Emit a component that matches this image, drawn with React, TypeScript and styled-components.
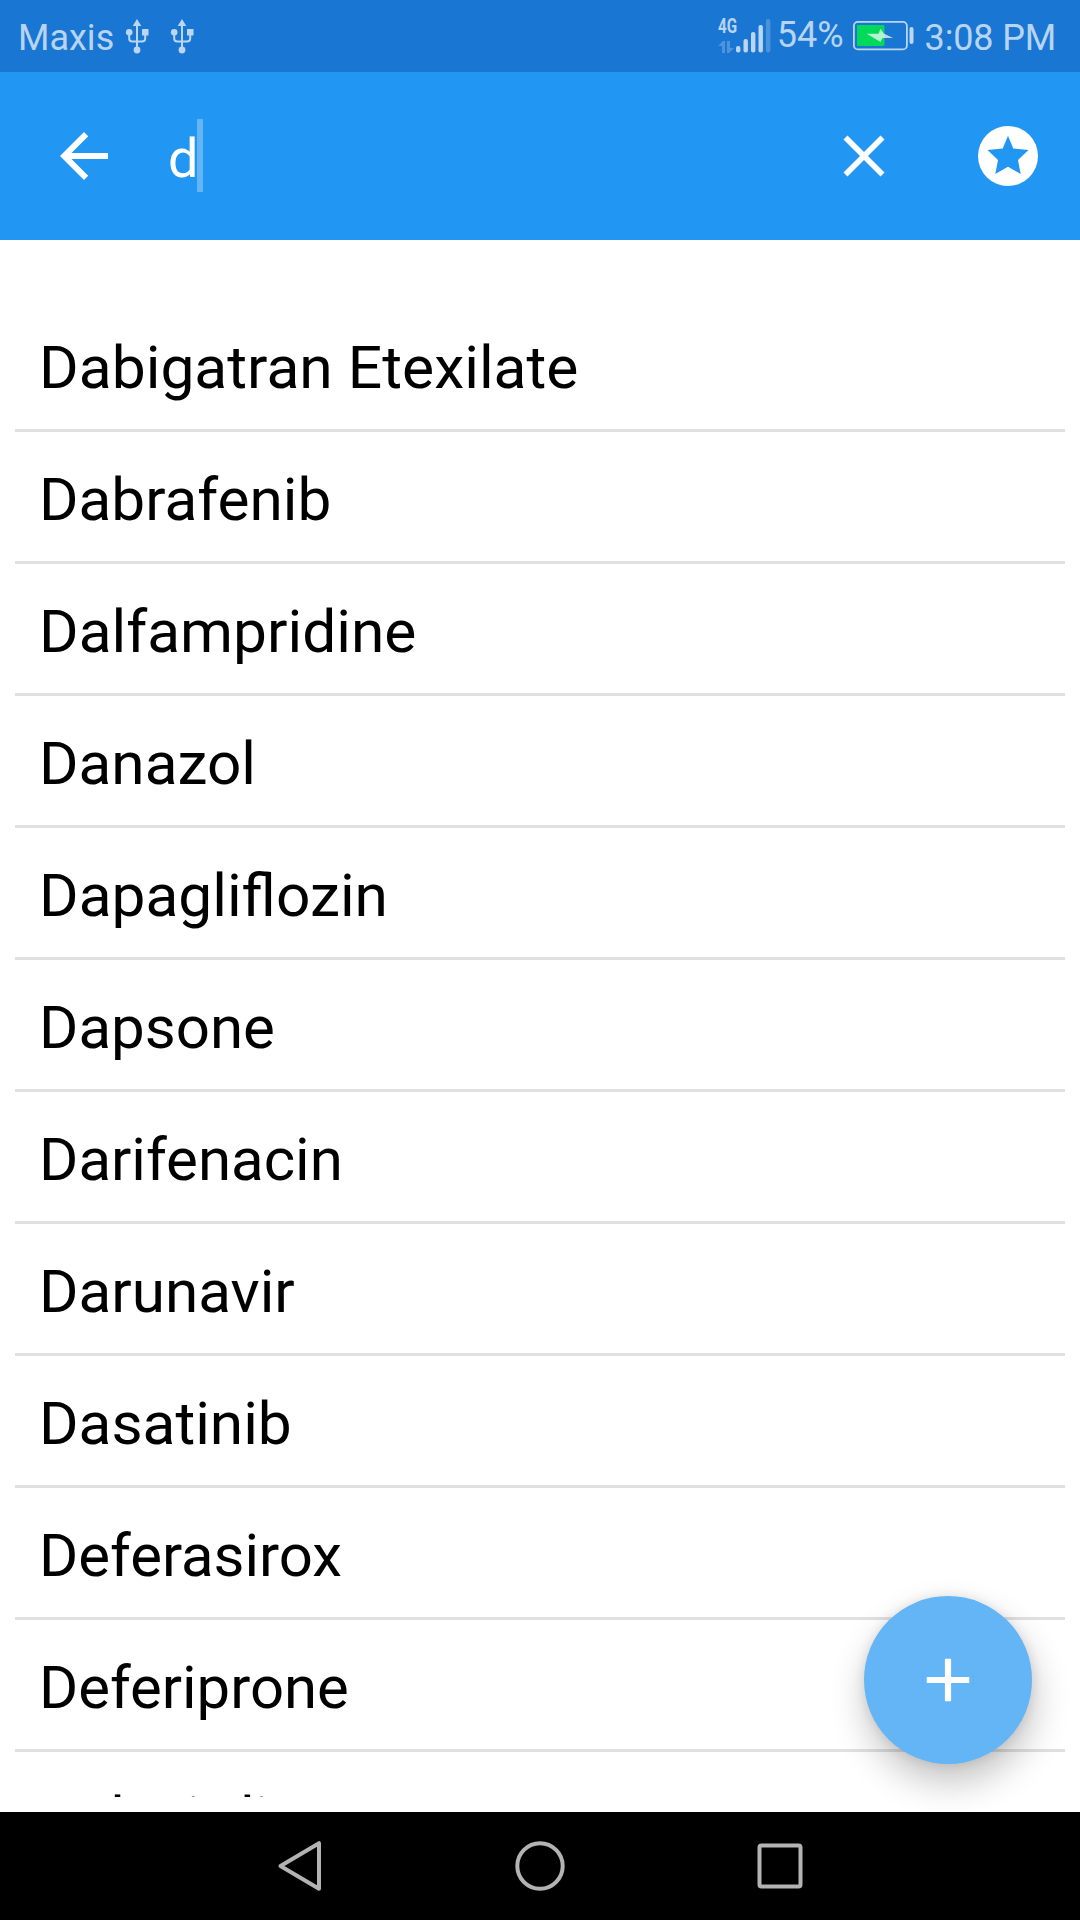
import React from "react";
import styled, { createGlobalStyle } from "styled-components";

const Global = createGlobalStyle`
  body { margin: 0; background: #fff; }
  * { box-sizing: border-box; }
`;

const Screen = styled.div`
  position: relative;
  display: flex;
  flex-direction: column;
  width: 1080px;
  height: 1920px;
  overflow: hidden;
  background: #fff;
  font-family: Roboto, "Noto Sans", sans-serif;
`;

const StatusBar = styled.header`
  display: flex;
  align-items: center;
  height: 72px;
  padding: 0 24px 0 18px;
  background: #1976d2;
  color: rgba(255, 255, 255, 0.7);
  flex: none;
`;

const StatusText = styled.span<{ $raise?: number; $drop?: number; $ml?: number; $tracking?: number }>`
  font-size: 36px;
  line-height: 42px;
  white-space: pre;
  margin-left: ${(p) => p.$ml ?? 0}px;
  letter-spacing: ${(p) => p.$tracking ?? 0}px;
  padding-top: ${(p) => p.$drop ?? 0}px;
  padding-bottom: ${(p) => p.$raise ?? 0}px;
`;

const Glyph = styled.svg<{ $ml?: number }>`
  display: block;
  flex: none;
  margin-left: ${(p) => p.$ml ?? 0}px;
`;

const Spacer = styled.div`
  flex: 1;
`;

const Network = styled.div`
  display: flex;
  flex-direction: column;
  width: 17px;
  height: 34px;
  justify-content: space-between;
`;

const NetworkLabel = styled.span`
  font-size: 20px;
  font-weight: 700;
  line-height: 14px;
  transform: scaleX(0.76);
  transform-origin: 0 0;
`;

const SearchBar = styled.div`
  display: flex;
  align-items: center;
  height: 168px;
  padding: 0 42px 0 48px;
  background: #2196f3;
  flex: none;
`;

const Field = styled.div`
  display: flex;
  align-items: center;
  flex: 1;
  margin-left: 48px;
`;

const Query = styled.span`
  width: 29px;
  color: #fff;
  font-size: 54px;
  line-height: 63px;
  padding-top: 5px;
`;

const Caret = styled.span`
  width: 6px;
  height: 73px;
  margin-bottom: 1px;
  background: #64b5f6;
`;

const List = styled.ul`
  height: 1497px;
  margin: 60px 15px 15px;
  padding: 0;
  list-style: none;
  overflow: hidden;
  flex: none;
`;

const Item = styled.li`
  display: flex;
  align-items: center;
  height: 132px;
  padding: 6px 24px 0;
  border-bottom: 3px solid #e0e0e0;
  color: #000;
  font-size: 60px;
  line-height: 71px;

  &:last-child {
    padding-top: 4px;
  }
`;

const Label = styled.span<{ $stretch: number }>`
  transform: scaleX(${(p) => p.$stretch});
  transform-origin: 0 50%;
`;

const AddButton = styled.button`
  position: absolute;
  left: 864px;
  top: 1596px;
  width: 168px;
  height: 168px;
  display: flex;
  align-items: center;
  justify-content: center;
  padding: 0;
  border: 0;
  border-radius: 50%;
  background: #64b5f6;
  box-shadow: 2px 18px 36px rgba(0, 0, 0, 0.24), 0 0 12px rgba(0, 0, 0, 0.1);
`;

const NavBar = styled.nav`
  display: flex;
  justify-content: center;
  align-items: center;
  gap: 180px;
  height: 108px;
  background: #000;
  flex: none;
`;

const Usb = ({ ml }: { ml: number }) => (
  <Glyph $ml={ml} width="24" height="36" viewBox="0 0 24 36" opacity="0.7">
    <g fill="none" stroke="#fff" strokeWidth="2">
      <path d="M12 7v24" />
      <path d="M4.200 16v4.500q0 3 3 3h9.800q3.200 0 3.200-3V16" />
    </g>
    <g fill="#fff">
      <path d="M12 1l4.300 7H7.700z" />
      <circle cx="12" cy="32" r="3.400" />
      <circle cx="4.200" cy="14.300" r="3.300" />
      <rect x="17" y="11" width="6.500" height="6.500" rx="0.500" />
    </g>
  </Glyph>
);

const drugs = [
  { name: "Dabigatran Etexilate", stretch: 1.009 },
  { name: "Dabrafenib", stretch: 1.005 },
  { name: "Dalfampridine", stretch: 1.007 },
  { name: "Danazol", stretch: 1.005 },
  { name: "Dapagliflozin", stretch: 1.007 },
  { name: "Dapsone", stretch: 1 },
  { name: "Darifenacin", stretch: 1 },
  { name: "Darunavir", stretch: 1.004 },
  { name: "Dasatinib", stretch: 1.006 },
  { name: "Deferasirox", stretch: 0.998 },
  { name: "Deferiprone", stretch: 0.997 },
  { name: "Delavirdine", stretch: 1 },
];

export default function App() {
  return (
    <Screen>
      <Global />
      <StatusBar>
        <StatusText $drop={4}>Maxis</StatusText>
        <Usb ml={11} />
        <Usb ml={21} />
        <Spacer />
        <Network>
          <NetworkLabel>4G</NetworkLabel>
          <Glyph width="16" height="12" viewBox="0 0 16 12" fill="#fff" opacity="0.22">
            <path d="M0 5L5 0h2v12H4V5zM9 0h3v7h4l-5 5H9z" />
          </Glyph>
        </Network>
        <Glyph width="36" height="34" viewBox="0 0 36 34" fill="currentColor">
          <rect x="1" y="27" width="4.400" height="6.500" rx="2" />
          <rect x="8.500" y="20" width="4.400" height="13.500" rx="2" />
          <rect x="16" y="13" width="4.400" height="20.500" rx="2" />
          <rect x="23.500" y="6" width="4.400" height="27.500" rx="2" />
          <rect x="31" y="0" width="4.400" height="33.500" rx="2" fillOpacity="0.3" />
        </Glyph>
        <StatusText $raise={2} $ml={6}>54%</StatusText>
        <Glyph $ml={9} width="62" height="30" viewBox="0 0 62 30">
          <rect x="0.900" y="0.900" width="53" height="27.500" rx="4" fill="none" stroke="currentColor" strokeWidth="1.800" />
          <rect x="4" y="4" width="27.500" height="21" rx="1" fill="#00d95a" />
          <path d="M13.700 12.700L25.500 12.700 27.500 7.800 30.800 12.500 40 16.900 29.500 17 27.500 21z" fill="currentColor" />
          <rect x="56.500" y="6" width="4" height="17" rx="2" fill="currentColor" />
        </Glyph>
        <StatusText $drop={4} $ml={10} $tracking={-0.15}>3:08 PM</StatusText>
      </StatusBar>
      <SearchBar>
        <Glyph width="72" height="72" viewBox="0 0 24 24" fill="#fff">
          <path d="M20 11H7.830l5.590-5.590L12 4l-8 8 8 8 1.410-1.410L7.830 13H20v-2z" />
        </Glyph>
        <Field>
          <Query>d</Query>
          <Caret />
        </Field>
        <Glyph width="42" height="42" viewBox="0 0 42 42" stroke="#fff" strokeWidth="5.600">
          <path d="M2.500 2.500l37 37M39.500 2.500l-37 37" />
        </Glyph>
        <Glyph $ml={93} width="60" height="60" viewBox="0 0 60 60">
          <circle cx="30" cy="30" r="30" fill="#fff" />
          <path d="M30 9.700L35.300 22.600 50.500 24 40 34 42.700 48 30 40.700 17.300 48 20 34 9.500 24 24.700 22.600z" fill="#2196f3" />
        </Glyph>
      </SearchBar>
      <List>
        {drugs.map(({ name, stretch }) => (
          <Item key={name}>
            <Label $stretch={stretch}>{name}</Label>
          </Item>
        ))}
      </List>
      <NavBar>
        <Glyph width="60" height="60" viewBox="0 0 60 60" fill="none" stroke="#b3b3b3" strokeWidth="4" strokeLinejoin="round">
          <path d="M10.500 30L49 7.200v45.600z" />
        </Glyph>
        <Glyph width="60" height="60" viewBox="0 0 60 60" fill="none" stroke="#b3b3b3" strokeWidth="4">
          <circle cx="30" cy="30" r="22.700" />
        </Glyph>
        <Glyph width="60" height="60" viewBox="0 0 60 60" fill="none" stroke="#b3b3b3" strokeWidth="4">
          <rect x="9.500" y="9.500" width="41" height="41" rx="2" />
        </Glyph>
      </NavBar>
      <AddButton aria-label="Add">
        <Glyph width="44" height="44" viewBox="0 0 44 44" stroke="#fff" strokeWidth="6.200">
          <path d="M22 0.700v42.600M0.700 22h42.600" />
        </Glyph>
      </AddButton>
    </Screen>
  );
}
